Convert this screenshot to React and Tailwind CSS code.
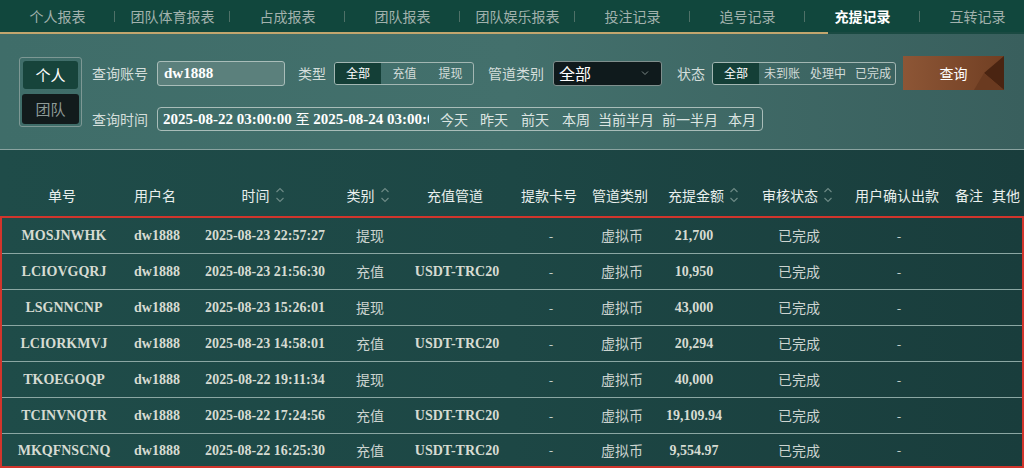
import React from "react";

const CJK = { fontFamily: '"Noto Sans CJK SC", "Noto Sans", sans-serif' };
const SERIF = { fontFamily: '"Liberation Serif", "Noto Sans CJK SC", serif' };

const tabs = ["个人报表", "团队体育报表", "占成报表", "团队报表", "团队娱乐报表", "投注记录", "追号记录", "充提记录", "互转记录"];

const rows = [
  ["MOSJNWHK", "2025-08-23 22:57:27", "提现", "", "21,700"],
  ["LCIOVGQRJ", "2025-08-23 21:56:30", "充值", "USDT-TRC20", "10,950"],
  ["LSGNNCNP", "2025-08-23 15:26:01", "提现", "", "43,000"],
  ["LCIORKMVJ", "2025-08-23 14:58:01", "充值", "USDT-TRC20", "20,294"],
  ["TKOEGOQP", "2025-08-22 19:11:34", "提现", "", "40,000"],
  ["TCINVNQTR", "2025-08-22 17:24:56", "充值", "USDT-TRC20", "19,109.94"],
  ["MKQFNSCNQ", "2025-08-22 16:25:30", "充值", "USDT-TRC20", "9,554.97"],
];

const GRID = "grid grid-cols-[124px_62px_154px_56px_118px_70px_72px_72px_138px_62px_96px]";

function SortIcon() {
  return (
    <svg width="10" height="18" viewBox="0 0 10 18" className="ml-[5px] shrink-0">
      <path d="M1.5 6 L5 2.5 L8.5 6" fill="none" stroke="#6c8985" strokeWidth="1.2" />
      <path d="M1.5 12 L5 15.5 L8.5 12" fill="none" stroke="#6c8985" strokeWidth="1.2" />
    </svg>
  );
}

function Seg({ items, widths }) {
  return (
    <div className="flex h-[23px] border border-[#a3b7b3] rounded-[3px] overflow-hidden">
      {items.map((t, i) => (
        <div
          key={t}
          className={
            "flex items-center justify-center text-[12px] " +
            (i === 0 ? "bg-[#143f37] text-white" : "text-[#d3dcd9]")
          }
          style={{ width: widths[i] }}
        >
          {t}
        </div>
      ))}
    </div>
  );
}

export default function App() {
  return (
    <div className="w-[1024px] h-[468px] overflow-hidden bg-[#1c4442]" style={CJK}>
      {/* top nav */}
      <div className="flex h-[32px] bg-[#11473d]">
        {tabs.map((t, i) => (
          <div key={t} className="relative w-[115px] shrink-0 flex items-center justify-center">
            <span className={"text-[14px] " + (i === 7 ? "text-white font-bold" : "text-[#a2b2ad]")}>{t}</span>
            {i < 8 && <span className="absolute right-0 top-[11px] w-px h-[11px] bg-[#4f7168]" />}
          </div>
        ))}
      </div>
      <div className="flex h-[2px] bg-[#1a4a42]">
        <div className="w-[828px] h-full bg-[#c2a66e]" />
      </div>

      {/* filters */}
      <div className="h-[115px] bg-gradient-to-r from-[#3f6d69] via-[#43706c] to-[#395f5d] flex items-start pl-[19px] pt-[22px]">
        <div className="mt-[1px] w-[63px] h-[70px] border border-[#7d9894] rounded-[3px] flex flex-col items-center pt-[3px]">
          <div className="w-[55px] h-[28px] bg-[#17443b] rounded-[3px] flex items-center justify-center text-white text-[15px]">个人</div>
          <div className="mt-[5px] w-[57px] h-[30px] bg-[#121b1c] rounded-[3px] flex items-center justify-center text-[#8e9a97] text-[15px]">团队</div>
        </div>
        <div className="ml-[10px] flex flex-col">
          <div className="flex items-center h-[34px]">
            <span className="text-[14px] text-[#d4dedb] w-[58px] whitespace-nowrap">查询账号</span>
            <div className="ml-[7px] w-[128px] h-[25px] bg-[#5b807c] border border-[#a9bdb9] rounded-[3px] flex items-center pl-[6px]">
              <span className="text-white font-bold text-[15px]" style={SERIF}>dw1888</span>
            </div>
            <span className="ml-[13px] text-[14px] text-[#d4dedb]">类型</span>
            <div className="ml-[8px]">
              <Seg items={["全部", "充值", "提现"]} widths={[46, 47, 45]} />
            </div>
            <span className="ml-[14px] text-[14px] text-[#d4dedb] whitespace-nowrap">管道类别</span>
            <div className="ml-[9px] w-[109px] h-[25px] bg-[#0f1a1c] border border-[#7f8f8d] rounded-[3px] flex items-center justify-between pl-[5px] pr-[12px]">
              <span className="text-white text-[16px]">全部</span>
              <svg width="8" height="6" viewBox="0 0 8 6">
                <path d="M1 1.5 L4 4.5 L7 1.5" fill="none" stroke="#7b8886" strokeWidth="1" />
              </svg>
            </div>
            <span className="ml-[15px] text-[14px] text-[#d4dedb]">状态</span>
            <div className="ml-[7px]">
              <Seg items={["全部", "未到账", "处理中", "已完成"]} widths={[46, 46, 46, 44]} />
            </div>
            <button className="relative ml-[7px] w-[101px] h-[34px] bg-gradient-to-r from-[#8d5636] to-[#713f23] overflow-hidden flex items-center justify-center">
              <svg className="absolute right-0 top-0" width="34" height="34" viewBox="0 0 34 34">
                <polygon points="34,0 34,34 14,17" fill="#4a2411" />
                <polygon points="14,17 34,34 4,34" fill="#6a3a20" />
              </svg>
              <span className="relative text-white text-[14px]">查询</span>
            </button>
          </div>
          <div className="mt-[17px] flex items-center h-[24px]">
            <span className="text-[14px] text-[#d4dedb] w-[58px] whitespace-nowrap">查询时间</span>
            <div className="ml-[7px] w-[606px] h-[24px] border border-[#a9bdb9] rounded-[4px] flex items-center pl-[5px]">
              <div className="shrink-0 w-[266px] overflow-hidden whitespace-nowrap text-white font-bold text-[15px]" style={SERIF}>
                2025-08-22 03:00:00 <span style={CJK} className="font-normal text-[14px]">至</span> 2025-08-24 03:00:00
              </div>
              <div className="shrink-0 flex text-[14px] text-[#dde5e2] whitespace-nowrap">
                <span className="ml-[11px]">今天</span>
                <span className="ml-[12px]">昨天</span>
                <span className="ml-[13px]">前天</span>
                <span className="ml-[13px]">本周</span>
                <span className="ml-[8px]">当前半月</span>
                <span className="ml-[8px]">前一半月</span>
                <span className="ml-[10px]">本月</span>
              </div>
            </div>
          </div>
        </div>
      </div>
      <div className="h-px bg-[#8aa3a0]" />

      {/* table */}
      <div className="h-[317px] bg-gradient-to-r from-[#1f4c49] via-[#1d4745] to-[#193d3c]">
        <div className="h-[34px]" />
        <div className={GRID + " h-[22px] items-center text-[14px] text-[#e9efed] whitespace-nowrap"}>
          <div className="flex justify-center">单号</div>
          <div className="flex justify-center">用户名</div>
          <div className="flex justify-center items-center">时间<SortIcon /></div>
          <div className="flex justify-center items-center">类别<SortIcon /></div>
          <div className="flex justify-center">充值管道</div>
          <div className="flex justify-center">提款卡号</div>
          <div className="flex justify-center">管道类别</div>
          <div className="flex justify-start items-center pl-[12px]">充提金额<SortIcon /></div>
          <div className="flex justify-start items-center pl-[34px]">审核状态<SortIcon /></div>
          <div className="flex justify-center">用户确认出款</div>
          <div className="flex items-center pl-[27px] gap-[9px]"><span>备注</span><span>其他</span></div>
        </div>
        <div className="h-[10px]" />
        <div className="border-2 border-[#d1352c]">
          {rows.map((r, i) => (
            <div
              key={r[0]}
              className={
                GRID +
                " items-center whitespace-nowrap " +
                (i < rows.length - 1 ? "h-[36px] border-b border-[#8ba7a3]" : "h-[32px]")
              }
            >
              <div className="flex justify-center font-bold text-[14px] text-[#d6dbd2]" style={SERIF}>{r[0]}</div>
              <div className="flex justify-center font-bold text-[14px] text-[#d6dbd2]" style={SERIF}>dw1888</div>
              <div className="flex justify-center font-bold text-[14px] text-[#d6dbd2]" style={SERIF}>{r[1]}</div>
              <div className="flex justify-center text-[14px] text-[#ccd4d0]">{r[2]}</div>
              <div className="flex justify-center font-bold text-[14px] text-[#d6dbd2]" style={SERIF}>{r[3]}</div>
              <div className="flex justify-center text-[13px] text-[#c5cecb]">-</div>
              <div className="flex justify-center text-[14px] text-[#ccd4d0]">虚拟币</div>
              <div className="flex justify-center font-bold text-[14px] text-[#d6dbd2]" style={SERIF}>{r[4]}</div>
              <div className="flex justify-center text-[14px] text-[#ccd4d0]">已完成</div>
              <div className="flex justify-center text-[13px] text-[#c5cecb]">-</div>
              <div />
            </div>
          ))}
        </div>
      </div>
    </div>
  );
}
